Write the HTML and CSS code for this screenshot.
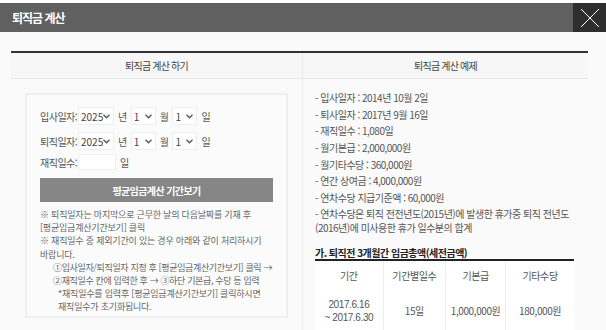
FILE: index.html
```html
<!DOCTYPE html>
<html lang="ko">
<head>
<meta charset="utf-8">
<title>퇴직금 계산</title>
<link rel="stylesheet" href="styles.css">
</head>
<body>
<div class="page">
  <header class="topbar">
    <h1 class="title">퇴직금 계산</h1>
    <button class="close" aria-label="닫기">
      <svg width="20" height="20" viewBox="0 0 20 20"><path d="M1 1L19 19M19 1L1 19" stroke="#fff" stroke-width="1" fill="none"/></svg>
    </button>
  </header>
  <main class="content">
    <div class="calc">
      <div class="col-head">퇴직금 계산 하기</div>
      <div class="col-head">퇴직금 계산 예제</div>
      <div class="cell left">
        <div class="box">
          <div class="frow">
            <span class="lbl">입사일자:</span>
            <span class="sel w36">2025<svg class="chev" width="7" height="5" viewBox="0 0 7 5"><path d="M0.5 0.8L3.5 3.8L6.5 0.8" stroke="#555" stroke-width="1.3" fill="none"/></svg></span>
            <span class="unit">년</span>
            <span class="sel w24">1<svg class="chev" width="7" height="5" viewBox="0 0 7 5"><path d="M0.5 0.8L3.5 3.8L6.5 0.8" stroke="#555" stroke-width="1.3" fill="none"/></svg></span>
            <span class="unit">월</span>
            <span class="sel w24">1<svg class="chev" width="7" height="5" viewBox="0 0 7 5"><path d="M0.5 0.8L3.5 3.8L6.5 0.8" stroke="#555" stroke-width="1.3" fill="none"/></svg></span>
            <span class="unit">일</span>
          </div>
          <div class="frow second">
            <span class="lbl">퇴직일자:</span>
            <span class="sel w36">2025<svg class="chev" width="7" height="5" viewBox="0 0 7 5"><path d="M0.5 0.8L3.5 3.8L6.5 0.8" stroke="#555" stroke-width="1.3" fill="none"/></svg></span>
            <span class="unit">년</span>
            <span class="sel w24">1<svg class="chev" width="7" height="5" viewBox="0 0 7 5"><path d="M0.5 0.8L3.5 3.8L6.5 0.8" stroke="#555" stroke-width="1.3" fill="none"/></svg></span>
            <span class="unit">월</span>
            <span class="sel w24">1<svg class="chev" width="7" height="5" viewBox="0 0 7 5"><path d="M0.5 0.8L3.5 3.8L6.5 0.8" stroke="#555" stroke-width="1.3" fill="none"/></svg></span>
            <span class="unit">일</span>
          </div>
          <div class="frow short">
            <span class="lbl">재직일수:</span>
            <span class="inp"></span>
            <span class="unit">일</span>
          </div>
          <button class="btn">평균임금계산 기간보기</button>
          <div class="notes">
            <p>※ 퇴직일자는 마지막으로 근무한 날의 다음날짜를 기재 후<br>[평균임금계산기간보기] 클릭</p>
            <p>※ 재직일수 중 제외기간이 있는 경우 아래와 같이 처리하시기<br>바랍니다.</p>
            <p class="ind1">①입사일자/퇴직일자 지정 후 [평균임금계산기간보기] 클릭 →<br>②재직일수 칸에 입력한 후 → ③하단 기본급, 수당 등 입력</p>
            <p class="ind2">*재직일수를 입력후 [평균임금계산기간보기] 클릭하시면<br>재직일수가 초기화됩니다.</p>
          </div>
        </div>
      </div>
      <div class="cell right">
        <ul class="ex">
          <li>- 입사일자 : 2014년 10월 2일</li>
          <li>- 퇴사일자 : 2017년 9월 16일</li>
          <li>- 재직일수 : 1,080일</li>
          <li>- 월기본급 : 2,000,000원</li>
          <li>- 월기타수당 : 360,000원</li>
          <li>- 연간 상여금 : 4,000,000원</li>
          <li>- 연차수당 지급기준액 : 60,000원</li>
          <li>- 연차수당은 퇴직 전전년도(2015년)에 발생한 휴가중 퇴직 전년도(2016년)에 미사용한 휴가 일수분의 합계</li>
        </ul>
        <h2 class="sub">가. 퇴직전 3개월간 임금총액(세전금액)</h2>
        <table class="wage">
          <colgroup><col class="c1"><col class="c2"><col class="c3"><col class="c4"></colgroup>
          <thead>
            <tr><th>기간</th><th>기간별일수</th><th>기본급</th><th>기타수당</th></tr>
          </thead>
          <tbody>
            <tr><td class="period">2017.6.16<br>~ 2017.6.30</td><td>15일</td><td>1,000,000원</td><td>180,000원</td></tr>
          </tbody>
        </table>
      </div>
    </div>
  </main>
</div>
</body>
</html>
```
FILE: styles.css
```css
* { box-sizing: border-box; }
html, body { margin: 0; padding: 0; }
body {
  background: #fafafa;
  font-family: "Noto Sans CJK KR", "Noto Sans", sans-serif;
  color: #555;
  overflow: hidden;
}
.page { border-top: 3px solid #fff; }
.topbar {
  display: flex;
  align-items: stretch;
  height: 29px;
  background: #606060;
}
.title {
  flex: 1;
  margin: 0;
  padding-left: 12px;
  font-size: 12px;
  font-weight: 700;
  color: #fff;
  line-height: 29px;
  letter-spacing: -1px;
}
.close {
  width: 33px;
  border: 0;
  padding: 0;
  background: #2e2e2e;
  display: flex;
  align-items: center;
  justify-content: center;
}
.content { padding: 19px 18px 0 11px; }
.calc {
  display: grid;
  grid-template-columns: 292px 285px;
  border-top: 2px solid #333;
}
.col-head {
  height: 26px;
  line-height: 25px;
  text-align: center;
  font-size: 10px;
  color: #444;
  letter-spacing: -0.8px;
  background: #f7f7f7;
  border-bottom: 1px solid #e8e8e8;
}
.col-head:first-child, .cell.left { border-right: 1px solid #ebebeb; }
.cell.left { padding: 14px 14px 0 14px; }
.box {
  border: 2px solid #efefef;
  background: #fbfbfb;
  padding: 12px 13px 9px 13px;
  height: 225px;
}
.frow {
  display: flex;
  align-items: center;
  height: 18px;
  margin-bottom: 7px;
  font-size: 10px;
  letter-spacing: -0.5px;
}
.frow.second { margin-bottom: 4px; }
.frow.short { height: 16px; margin-bottom: 0; }
.lbl { width: 38px; color: #555; }
.unit { margin: 0 4px 0 4px; color: #555; }
.sel {
  position: relative;
  height: 18px;
  line-height: 17px;
  background: #fff;
  border: 1px solid #eee;
  padding-left: 2px;
  font-size: 10px;
  color: #444;
  letter-spacing: 0;
}
.sel.w36 { width: 36px; }
.sel.w24 { width: 25px; }
.chev { position: absolute; right: 3px; top: 6px; }
.inp {
  width: 38px;
  height: 16px;
  background: #fff;
  border: 1px solid #f0f0f0;
}
.btn {
  display: block;
  width: 100%;
  height: 24px;
  margin-top: 8px;
  border: 0;
  background: #868686;
  color: #fff;
  font-family: inherit;
  font-weight: 700;
  font-size: 10px;
  letter-spacing: -0.6px;
}
.notes {
  margin-top: 6px;
  font-size: 9px;
  line-height: 13.2px;
  color: #666;
  letter-spacing: -0.2px;
  white-space: nowrap;
}
.notes p { margin: 0; }
.notes .ind1 { padding-left: 13px; letter-spacing: -0.35px; }
.notes .ind2 { padding-left: 18px; }
.cell.right { padding: 11px 14px 0 12px; }
.ex {
  list-style: none;
  margin: 0;
  padding: 0;
  font-size: 10px;
  color: #555;
  letter-spacing: -0.5px;
}
.ex li { line-height: 14px; padding: 1.3px 0; }
.sub {
  margin: 9px 0 0 0;
  font-size: 10px;
  font-weight: 700;
  color: #222;
  line-height: 13px;
  padding-bottom: 0;
  border-bottom: 2px solid #222;
  letter-spacing: -0.5px;
}
.wage {
  width: 100%;
  border-collapse: collapse;
  background: #fff;
  font-size: 10px;
  color: #555;
  letter-spacing: -0.4px;
}
.c1 { width: 68px; }
.c2 { width: 62px; }
.c3 { width: 60px; }
.c4 { width: 68px; }
.wage th, .wage td {
  font-weight: 400;
  text-align: center;
  border-left: 1px solid #eee;
  padding: 0;
}
.wage th:first-child, .wage td:first-child { border-left: 0; }
.wage th { height: 30px; }
.wage td { height: 40px; line-height: 13px; }
.wage td.period { font-family: "Liberation Sans", sans-serif; line-height: 13px; }
```
